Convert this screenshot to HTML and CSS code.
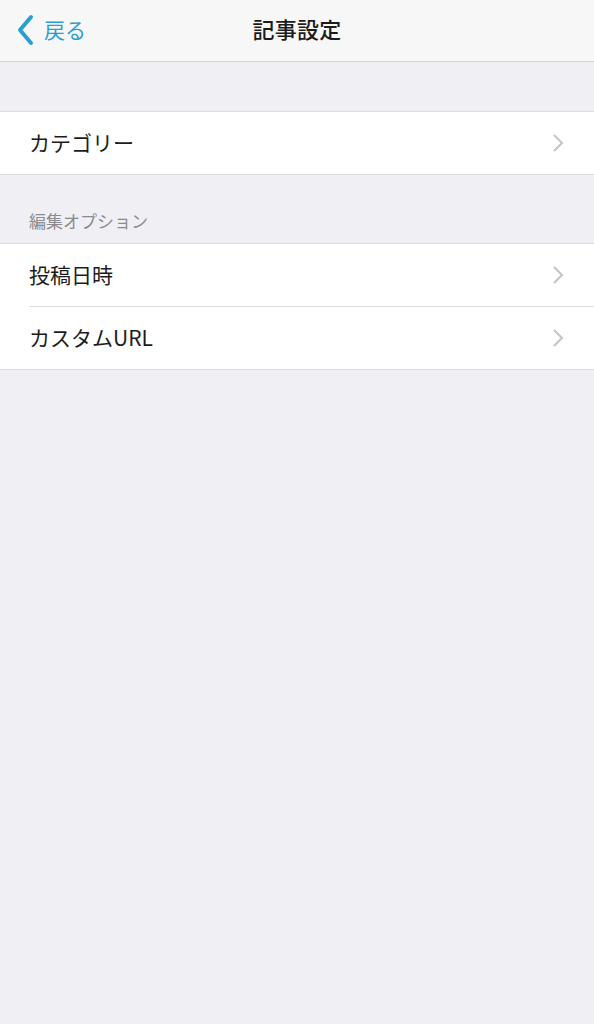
FILE: index.html
```html
<!DOCTYPE html>
<html lang="ja">
<head>
<meta charset="utf-8">
<link rel="stylesheet" href="styles.css">
</head>
<body>
<div class="nav">
  <div class="back">
    <svg class="back-icon" width="20" height="32" viewBox="0 0 20 32"><path d="M15 3 L4 16 L15 29" fill="none" stroke="#2a9fcf" stroke-width="4" stroke-linecap="round" stroke-linejoin="round"/></svg>
    <span class="back-label">戻る</span>
  </div>
  <div class="title">記事設定</div>
</div>
<div class="spacer"></div>
<div class="group">
  <div class="row"><span class="label">カテゴリー</span><svg class="chev" width="12" height="20" viewBox="0 0 12 20"><path d="M2 2 L10 10 L2 18" fill="none" stroke="#c4c4c8" stroke-width="2"/></svg></div>
</div>
<div class="section-header">編集オプション</div>
<div class="group">
  <div class="row"><span class="label">投稿日時</span><svg class="chev" width="12" height="20" viewBox="0 0 12 20"><path d="M2 2 L10 10 L2 18" fill="none" stroke="#c4c4c8" stroke-width="2"/></svg></div>
  <div class="row"><span class="label">カスタムURL</span><svg class="chev" width="12" height="20" viewBox="0 0 12 20"><path d="M2 2 L10 10 L2 18" fill="none" stroke="#c4c4c8" stroke-width="2"/></svg></div>
</div>
</body>
</html>
```
FILE: styles.css
```css
html, body {
  margin: 0;
  padding: 0;
  background: #efeff4;
  font-family: "Noto Sans CJK JP", "Noto Sans", sans-serif;
  color: #1c1c1c;
}
.nav {
  position: relative;
  height: 61px;
  background: #f7f7f8;
  border-bottom: 1px solid #d4d4d8;
  display: flex;
  align-items: center;
  justify-content: center;
}
.back {
  position: absolute;
  left: 16px;
  top: 13px;
  display: flex;
  align-items: center;
  gap: 8px;
  color: #2a9fcf;
}
.back-label {
  font-size: 21px;
  line-height: 32px;
  padding-bottom: 2px;
}
.title {
  font-size: 22px;
  font-weight: 500;
  letter-spacing: 0.3px;
  padding-bottom: 5px;
}
.spacer {
  height: 49px;
}
.group {
  background: #fff;
  border-top: 1px solid #dcdce0;
  border-bottom: 1px solid #dcdce0;
}
.row {
  height: 62px;
  margin-left: 29px;
  padding-right: 30px;
  display: flex;
  align-items: center;
  justify-content: space-between;
}
.row + .row {
  border-top: 1px solid #dcdce0;
}
.label {
  font-size: 21px;
  padding-bottom: 2px;
}
.section-header {
  height: 68px;
  box-sizing: border-box;
  padding: 34px 0 0 29px;
  font-size: 17px;
  color: #8a8a8f;
  line-height: 24px;
}
```
